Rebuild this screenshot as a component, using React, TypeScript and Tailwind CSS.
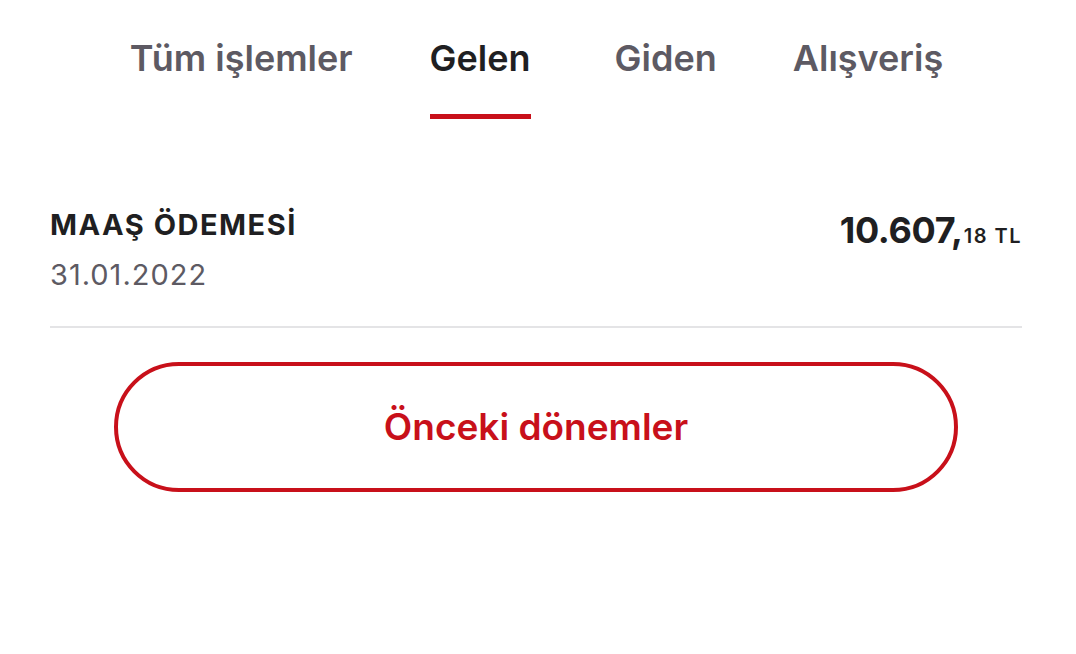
import React from "react";

export default function App() {
  const tabs = [
    { t: "Tüm işlemler", ml: "ml-0" },
    { t: "Gelen", ml: "ml-[77px]" },
    { t: "Giden", ml: "ml-[84px]" },
    { t: "Alışveriş", ml: "ml-[76px]" },
  ];
  return (
    <div className="w-[1076px] h-[654px] bg-white overflow-hidden" style={{ fontFamily: "Inter, 'Noto Sans', sans-serif" }}>
      <div className="flex justify-center pr-[3px] pt-[34px]">
        {tabs.map((x, i) => (
          <div key={x.t} className={`flex flex-col items-center ${x.ml}`}>
            <div className={`text-[36px] leading-[48px] font-semibold tracking-[0px] ${i === 1 ? "text-[#1f1f22]" : "text-[#5d5a63]"}`}>{x.t}</div>
            <div className={`mt-[32px] h-[5px] w-full ${i === 1 ? "bg-[#c8101a]" : "bg-transparent"}`} />
          </div>
        ))}
      </div>
      <div className="pl-[50px] pr-[54px] pt-[88px]">
        <div className="flex justify-between items-start">
          <div>
            <div className="text-[29px] leading-[36px] font-bold text-[#1f1f22] tracking-[1.5px]">MAAŞ ÖDEMESİ</div>
            <div className="text-[29px] leading-[36px] mt-[14px] text-[#5d5a63] tracking-[1px]">31.01.2022</div>
          </div>
          <div className="flex items-baseline pt-[3px]">
            <span className="text-[36px] leading-[40px] font-bold text-[#1f1f22] tracking-[-0.3px]">10.607,</span>
            <span className="text-[20px] font-semibold text-[#1f1f22] ml-[1px] tracking-[1.5px]">18 TL</span>
          </div>
        </div>
        <div className="mt-[33px] h-[2px] bg-[#e4e4e6]" />
      </div>
      <div className="pl-[114px] pr-[118px] pt-[34px]">
        <button className="w-full h-[130px] rounded-full border-[4px] border-[#c8101a] flex items-center justify-center">
          <span className="text-[37px] font-semibold text-[#c8101a] tracking-[0px]">Önceki dönemler</span>
        </button>
      </div>
    </div>
  );
}
